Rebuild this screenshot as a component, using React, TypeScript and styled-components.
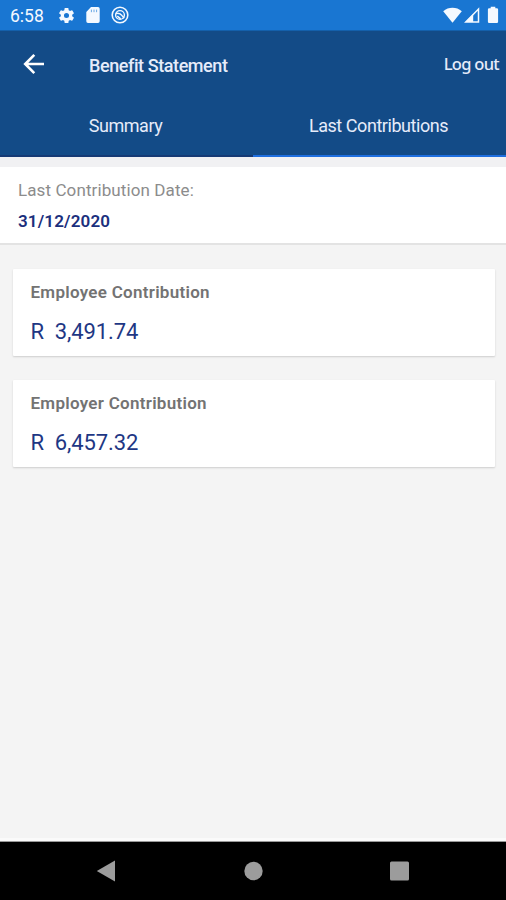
import React from 'react';
import styled, { createGlobalStyle } from 'styled-components';

const GlobalStyle = createGlobalStyle`
  * { box-sizing: border-box; }
  body { margin: 0; background: #f4f4f4; font-family: Roboto, "Liberation Sans", sans-serif; }
`;

const Screen = styled.div`
  width: 506px;
  height: 900px;
  display: flex;
  flex-direction: column;
  overflow: hidden;
  background: #f4f4f4;
`;

const StatusBar = styled.div`
  height: 31px;
  flex: none;
  display: flex;
  justify-content: space-between;
  padding: 0 6.5px 0 10px;
  background: #1976d2;
  border-bottom: 1px solid #1460ab;
  color: #f4f9ff;
`;

const StatusGroup = styled.div<{ $gap: number }>`
  display: flex;
  align-items: center;
  gap: ${p => p.$gap}px;
  svg { display: block; }
`;

const Clock = styled.span`
  width: 36px;
  font-size: 17.5px;
  line-height: 30px;
  padding-top: 1px;
`;

const Header = styled.header`
  height: 126px;
  flex: none;
  display: flex;
  flex-direction: column;
  background: #134b87;
  color: #e6ecfa;
`;

const Toolbar = styled.div`
  height: 68px;
  display: flex;
  align-items: center;
  padding: 0 7px 0 22px;
`;

const BackButton = styled.button`
  width: 24px;
  height: 24px;
  padding: 0;
  margin: 0 43px 2px 0;
  border: 0;
  background: none;
  color: #fff;
  svg { display: block; }
`;

const Title = styled.h1`
  flex: 1;
  margin: 0;
  font-size: 18px;
  font-weight: 500;
  letter-spacing: -0.42px;
`;

const LogOut = styled.button`
  padding: 0;
  margin-bottom: 3px;
  border: 0;
  background: none;
  color: inherit;
  font: 500 16.5px "Noto Sans", sans-serif;
  letter-spacing: -0.7px;
`;

const Tabs = styled.nav`
  flex: 1;
  display: grid;
  grid-template-columns: 1fr 1fr;
`;

const Tab = styled.button<{ $active?: boolean }>`
  padding: 0 2px 3px 0;
  border: 0;
  border-bottom: 2px solid ${p => (p.$active ? '#1f6fe0' : '#163a75')};
  background: none;
  color: inherit;
  font: 400 18px Roboto, sans-serif;
  letter-spacing: -0.45px;
`;

const DateBand = styled.section`
  height: 88px;
  flex: none;
  padding: 13px 18px 0;
  border-top: 10px solid #f1f1f3;
  border-bottom: 2px solid #e3e3e3;
  background: #fff;
`;

const DateLabel = styled.div`
  font-size: 17px;
  line-height: 20px;
  letter-spacing: 0.1px;
  color: #8c8c8c;
`;

const DateValue = styled.div`
  margin-top: 11px;
  font-size: 17px;
  font-weight: 600;
  line-height: 20px;
  letter-spacing: 0.15px;
  color: #1b2f7d;
`;

const Cards = styled.main`
  flex: 1;
  display: flex;
  flex-direction: column;
  gap: 24px;
  padding: 24px 11px 0 13px;
`;

const Card = styled.article`
  height: 87px;
  padding: 13px 18px 0 17.5px;
  border-radius: 1px;
  background: #fff;
  box-shadow: 0 1px 2px rgba(0, 0, 0, 0.16);
`;

const CardTitle = styled.h2`
  margin: 0;
  font-size: 17px;
  font-weight: 600;
  line-height: 20px;
  letter-spacing: 0.28px;
  color: #737373;
`;

const Amount = styled.div`
  margin-top: 16px;
  font-size: 22px;
  line-height: 28px;
  letter-spacing: -0.1px;
  white-space: pre;
  color: #1e3784;
`;

const NavigationBar = styled.footer`
  height: 59px;
  flex: none;
  display: flex;
  justify-content: space-between;
  align-items: center;
  padding: 0 95px 0 96px;
  border-top: 1px solid #999;
  background: #000;
  box-shadow: 0 -3px 0 #fafafa;
  svg { display: block; }
`;

const contributions = [
  { title: 'Employee Contribution', amount: 'R  3,491.74' },
  { title: 'Employer Contribution', amount: 'R  6,457.32' },
];

const GearIcon = () => (
  <svg width="19" height="19" viewBox="0 0 24 24" fill="currentColor">
    <path d="M19.14 12.94c.04-.3.06-.61.06-.94s-.02-.64-.07-.94l2.03-1.58a.49.49 0 0 0 .12-.61l-1.92-3.32a.49.49 0 0 0-.59-.22l-2.39.96a7 7 0 0 0-1.62-.94l-.36-2.54a.48.48 0 0 0-.48-.41h-3.84a.48.48 0 0 0-.47.41l-.36 2.54a7.3 7.3 0 0 0-1.62.94l-2.39-.96a.49.49 0 0 0-.59.22L2.74 8.87a.48.48 0 0 0 .12.61l2.03 1.58a6 6 0 0 0 0 1.88l-2.03 1.58a.49.49 0 0 0-.12.61l1.92 3.32c.12.22.37.29.59.22l2.39-.96c.5.38 1.03.7 1.62.94l.36 2.54c.05.24.24.41.48.41h3.84c.24 0 .44-.17.47-.41l.36-2.54a7.3 7.3 0 0 0 1.62-.94l2.39.96c.22.08.47 0 .59-.22l1.92-3.32a.48.48 0 0 0-.12-.61zM12 15.2A3.2 3.2 0 1 1 12 8.8a3.2 3.2 0 0 1 0 6.4z" />
  </svg>
);

const StorageIcon = () => (
  <svg width="14" height="16" viewBox="0 0 14 16" fill="currentColor">
    <path d="M5 0h7a1.7 1.7 0 0 1 1.7 1.7v12.6A1.7 1.7 0 0 1 12 16H2a1.7 1.7 0 0 1-1.7-1.7V5z" />
    <path d="M5.4 2.6v2.6M8 2.6v2.6M10.6 2.6v2.6" stroke="#6aa8e4" strokeWidth="1" />
  </svg>
);

const SignalCircleIcon = () => (
  <svg width="18" height="18" viewBox="0 0 18 18" fill="none" stroke="currentColor">
    <circle cx="9" cy="9" r="7.8" strokeWidth="1.6" />
    <circle cx="9" cy="9" r="4.4" strokeWidth="1.4" />
    <path d="M4.8 7.4c3-.7 4.6-.2 6 2l2.4 2.8M6.3 10.2l3.4 2.6" strokeWidth="1.5" />
  </svg>
);

export default function App() {
  return (
    <Screen>
      <GlobalStyle />
      <StatusBar>
        <StatusGroup $gap={10.5}>
          <Clock>6:58</Clock>
          <GearIcon />
          <StorageIcon />
          <SignalCircleIcon />
        </StatusGroup>
        <StatusGroup $gap={1.75}>
          <svg width="19" height="16" viewBox="0 0 19 16" fill="currentColor">
            <path d="M.2 4.2C5.4-.4 13.6-.4 18.8 4.2L9.5 15.7z" />
          </svg>
          <svg width="16" height="16" viewBox="0 0 16 16">
            <path d="M14.5 2V15H1.8z" fill="none" stroke="currentColor" strokeWidth="1.5" />
            <path d="M9.2 7V15H1.4z" fill="currentColor" />
          </svg>
          <svg width="18" height="18" viewBox="0 0 18 18" fill="currentColor">
            <path d="M8.7 2.3V.8h4.6v1.5h1.5a1.3 1.3 0 0 1 1.3 1.3v12.2a1.3 1.3 0 0 1-1.3 1.3H7.2a1.3 1.3 0 0 1-1.3-1.3V3.6a1.3 1.3 0 0 1 1.3-1.3z" />
          </svg>
        </StatusGroup>
      </StatusBar>

      <Header>
        <Toolbar>
          <BackButton aria-label="Back">
            <svg width="24" height="24" viewBox="0 0 24 24" fill="none" stroke="currentColor" strokeWidth="2.6">
              <path d="M22 12H4M12.3 2.8 3.2 12l9.1 9.2" />
            </svg>
          </BackButton>
          <Title>Benefit Statement</Title>
          <LogOut>Log out</LogOut>
        </Toolbar>
        <Tabs>
          <Tab>Summary</Tab>
          <Tab $active>Last Contributions</Tab>
        </Tabs>
      </Header>

      <DateBand>
        <DateLabel>Last Contribution Date:</DateLabel>
        <DateValue>31/12/2020</DateValue>
      </DateBand>

      <Cards>
        {contributions.map(item => (
          <Card key={item.title}>
            <CardTitle>{item.title}</CardTitle>
            <Amount>{item.amount}</Amount>
          </Card>
        ))}
      </Cards>

      <NavigationBar>
        <svg width="20" height="22" viewBox="0 0 20 22" fill="#9c9c9c">
          <path d="M19 .5v21L.8 11z" />
        </svg>
        <svg width="20" height="20" viewBox="0 0 20 20" fill="#9c9c9c">
          <circle cx="10.5" cy="10" r="9.2" />
        </svg>
        <svg width="22" height="22" viewBox="0 0 22 22" fill="#9c9c9c">
          <rect x="1" y="1.5" width="19" height="19" rx="1.5" />
        </svg>
      </NavigationBar>
    </Screen>
  );
}
